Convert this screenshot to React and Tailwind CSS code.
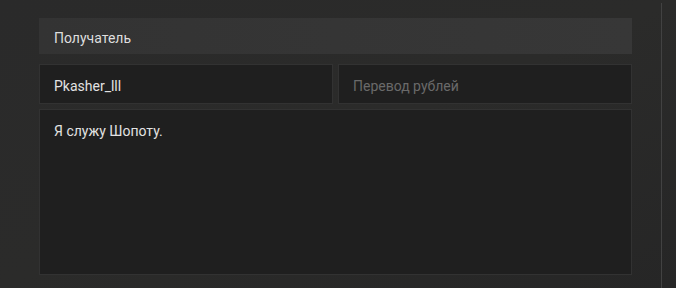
export default function App() {
  return (
    <div
      className="h-[288px] w-[676px] flex overflow-hidden bg-gradient-to-br from-[#2a2a2a] via-[#2b2b2a] to-[#262626]"
      style={{ fontFamily: 'Roboto, "Noto Sans", sans-serif' }}
    >
      <div className="pl-[39px] pt-[18px] w-[632px] shrink-0 flex flex-col">
        <div className="h-[36px] bg-gradient-to-r from-[#333333] to-[#373737] px-[15px] pt-[4px] flex items-center text-[14px] text-[#dedede]">
          Получатель
        </div>
        <div className="mt-[10px] flex gap-[5px] h-[40px]">
          <div className="flex-1 border border-[#323232] bg-[#1f1f1f] px-[14px] pt-[4px] flex items-center text-[14px] text-[#e2e2e2]">
            Pkasher_lll
          </div>
          <div className="flex-1 border border-[#323232] bg-[#1f1f1f] px-[14px] pt-[4px] flex items-center text-[14px] text-[#6a6a6a]">
            Перевод рублей
          </div>
        </div>
        <div className="mt-[5px] h-[166px] border border-[#323232] bg-[#1f1f1f] px-[14px] pt-[11px] text-[14px] leading-[20px] text-[#e2e2e2]">
          Я служу Шопоту.
        </div>
      </div>
      <div className="ml-[29px] mt-[3px] w-px h-[285px] bg-[#424242]" />
    </div>
  );
}
